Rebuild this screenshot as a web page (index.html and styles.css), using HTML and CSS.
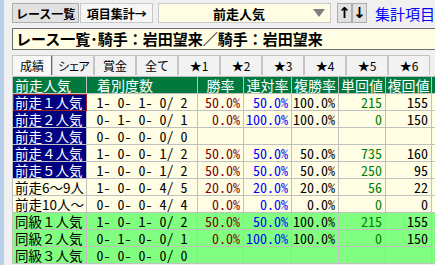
FILE: index.html
```html
<!DOCTYPE html>
<html lang="ja">
<head>
    <meta charset="UTF-8">
    <title>項目集計</title>
    <link rel="stylesheet" href="styles.css">
</head>
<body>
    <div class="window">
        <div class="side"></div>
        <div class="main">
            <div class="toolbar">
                <button class="btn">レース一覧</button>
                <button class="btn btn-on">項目集計→</button>
                <div class="combo">
                    <span class="combo-text">前走人気</span>
                    <span class="combo-arrow"></span>
                </div>
                <div class="arrows">
                    <button class="arrow-btn">↑</button>
                    <button class="arrow-btn">↓</button>
                </div>
                <span class="link">集計項目</span>
            </div>

            <div class="title">レース一覧･騎手：岩田望来／騎手：岩田望来</div>

            <div class="tabs">
                <div class="tab tab-on">成績</div>
                <div class="tab"><span class="narrow">シェア</span></div>
                <div class="tab">賞金</div>
                <div class="tab">全て</div>
                <div class="tab">★1</div>
                <div class="tab">★2</div>
                <div class="tab">★3</div>
                <div class="tab">★4</div>
                <div class="tab">★5</div>
                <div class="tab">★6</div>
            </div>

            <div class="grid-wrap">
                <table class="grid">
                    <colgroup>
                        <col style="width:74px">
                        <col style="width:111px">
                        <col style="width:46px">
                        <col style="width:48px">
                        <col style="width:47px">
                        <col style="width:47px">
                        <col style="width:46px">
                        <col style="width:60px">
                    </colgroup>
                    <tr class="head">
                        <th class="name">前走人気</th>
                        <th class="count">着別度数</th>
                        <th>勝率</th>
                        <th>連対率</th>
                        <th>複勝率</th>
                        <th>単回値</th>
                        <th>複回値</th>
                        <th class="cut">単勝</th>
                    </tr>
                    <tr class="cream">
                        <td class="name navy focus">前走１人気</td>
                        <td class="count">1- 0- 1- 0/ 2</td>
                        <td class="win">50.0%</td>
                        <td class="rentai">50.0%</td>
                        <td>100.0%</td>
                        <td class="tan">215</td>
                        <td>155</td>
                        <td></td>
                    </tr>
                    <tr class="cream">
                        <td class="name navy">前走２人気</td>
                        <td class="count">0- 1- 0- 0/ 1</td>
                        <td class="win">0.0%</td>
                        <td class="rentai">100.0%</td>
                        <td>100.0%</td>
                        <td class="tan">0</td>
                        <td>150</td>
                        <td></td>
                    </tr>
                    <tr class="cream">
                        <td class="name navy">前走３人気</td>
                        <td class="count">0- 0- 0- 0/ 0</td>
                        <td></td>
                        <td></td>
                        <td></td>
                        <td></td>
                        <td></td>
                        <td></td>
                    </tr>
                    <tr class="cream">
                        <td class="name navy">前走４人気</td>
                        <td class="count">1- 0- 0- 1/ 2</td>
                        <td class="win">50.0%</td>
                        <td class="rentai">50.0%</td>
                        <td>50.0%</td>
                        <td class="tan">735</td>
                        <td>160</td>
                        <td></td>
                    </tr>
                    <tr class="cream">
                        <td class="name navy">前走５人気</td>
                        <td class="count">1- 0- 0- 1/ 2</td>
                        <td class="win">50.0%</td>
                        <td class="rentai">50.0%</td>
                        <td>50.0%</td>
                        <td class="tan">250</td>
                        <td>95</td>
                        <td></td>
                    </tr>
                    <tr class="cream">
                        <td class="name">前走6〜9人</td>
                        <td class="count">1- 0- 0- 4/ 5</td>
                        <td class="win">20.0%</td>
                        <td class="rentai">20.0%</td>
                        <td>20.0%</td>
                        <td class="tan">56</td>
                        <td>22</td>
                        <td></td>
                    </tr>
                    <tr class="cream">
                        <td class="name">前走10人〜</td>
                        <td class="count">0- 0- 0- 4/ 4</td>
                        <td class="win">0.0%</td>
                        <td class="rentai">0.0%</td>
                        <td>0.0%</td>
                        <td class="tan">0</td>
                        <td>0</td>
                        <td></td>
                    </tr>
                    <tr class="green">
                        <td class="name">同級１人気</td>
                        <td class="count">1- 0- 1- 0/ 2</td>
                        <td class="win">50.0%</td>
                        <td class="rentai">50.0%</td>
                        <td>100.0%</td>
                        <td class="tan">215</td>
                        <td>155</td>
                        <td></td>
                    </tr>
                    <tr class="green">
                        <td class="name">同級２人気</td>
                        <td class="count">0- 1- 0- 0/ 1</td>
                        <td class="win">0.0%</td>
                        <td class="rentai">100.0%</td>
                        <td>100.0%</td>
                        <td class="tan">0</td>
                        <td>150</td>
                        <td></td>
                    </tr>
                    <tr class="green">
                        <td class="name">同級３人気</td>
                        <td class="count">0- 0- 0- 0/ 0</td>
                        <td></td>
                        <td></td>
                        <td></td>
                        <td></td>
                        <td></td>
                        <td></td>
                    </tr>
                </table>
            </div>
        </div>
    </div>
</body>
</html>
```

FILE: styles.css
```css
body {
    margin: 0;
    width: 435px;
    height: 265px;
    overflow: hidden;
    background-color: #f0f0f0;
    font-family: "Noto Sans CJK JP", sans-serif;
}
.window {
    display: flex;
    height: 265px;
}
.side {
    width: 4px;
    flex-shrink: 0;
    background-color: #b9d1ea;
}
.main {
    padding-left: 8px;
    min-width: 0;
    flex-grow: 1;
}
.toolbar {
    display: flex;
    align-items: center;
    height: 20px;
    padding-top: 3px;
    white-space: nowrap;
}
.btn {
    height: 20px;
    padding: 0;
    margin: 0 1px 0 0;
    border: 1px solid #adadad;
    background-color: #e1e1e1;
    font: bold 12px "Noto Sans CJK JP", sans-serif;
    line-height: 17px;
    color: #000;
}
.btn:first-child { width: 72px; }
.btn-on {
    width: 78px;
    background-color: #f6f6f6;
    border-color: #c8c8c8;
}
.combo {
    display: flex;
    align-items: center;
    width: 183px;
    height: 18px;
    margin-left: 4px;
    border: 1px solid #c8c8c8;
    background-color: #fffde3;
}
.combo-text {
    flex-grow: 1;
    text-align: center;
    font-weight: bold;
    font-size: 13px;
    padding-left: 6px;
}
.combo-arrow {
    width: 0;
    height: 0;
    margin-right: 5px;
    border-left: 6px solid transparent;
    border-right: 6px solid transparent;
    border-top: 8px solid #808080;
}
.arrows {
    display: flex;
    margin-left: 6px;
}
.arrow-btn {
    width: 15px;
    height: 20px;
    padding: 0;
    margin: 0;
    border: 1px solid #adadad;
    background-color: #e1e1e1;
    font: bold 15px "DejaVu Sans", sans-serif;
    line-height: 16px;
    color: #000;
}
.link {
    margin-left: 8px;
    color: #0000ff;
    font-size: 15px;
}
.title {
    margin-top: 5px;
    width: 440px;
    height: 20px;
    border: 1px solid #6d6d6d;
    background-color: #fffde3;
    font-weight: bold;
    font-size: 15px;
    line-height: 20px;
    padding-left: 3px;
    white-space: nowrap;
}
.tabs {
    display: flex;
    margin-top: 5px;
    height: 20px;
    white-space: nowrap;
}
.tab {
    box-sizing: border-box;
    width: 42px;
    flex-shrink: 0;
    height: 20px;
    border: 1px solid #c4c4c4;
    border-bottom: none;
    background-color: #f2f2f2;
    font-size: 12px;
    line-height: 19px;
    text-align: center;
}
.tab-on {
    width: 40px;
    background-color: #f8f8f8;
    border-right: 1px solid #6a6a6a;
}
.narrow { letter-spacing: -2px; }
.grid-wrap {
    margin-top: 1px;
}
.grid {
    border-collapse: collapse;
    table-layout: fixed;
    width: 479px;
    font-size: 14px;
}
.grid th, .grid td {
    height: 16px;
    padding: 0 3px 0 0;
    border: 1px solid #c0c0c0;
    line-height: 16px;
    white-space: nowrap;
    overflow: hidden;
    text-align: right;
    font-weight: normal;
    font-feature-settings: "hwid";
}
.grid .head th {
    background-color: #00793e;
    color: #fff;
    text-align: center;
    padding: 0;
}
.grid .head th.name { text-align: left; padding-left: 2px; }
.grid .head th.count { text-align: left; padding-left: 10px; }
.grid .head th.cut { text-align: left; padding-left: 3px; }
.cream td { background-color: #fffde3; }
.green td { background-color: #80ff80; }
.grid td.name {
    text-align: left;
    padding: 0 0 0 2px;
    font-size: 13.5px;
    font-feature-settings: normal;
}
.grid td.navy {
    background-color: #000080;
    color: #fff;
}
.grid td.focus {
    outline: 1px solid #a02020;
    outline-offset: -1px;
}
.grid td.count {
    text-align: center;
    padding: 0;
}
.win { color: #800000; }
.rentai { color: #0000ff; }
.tan { color: #008000; }
```
